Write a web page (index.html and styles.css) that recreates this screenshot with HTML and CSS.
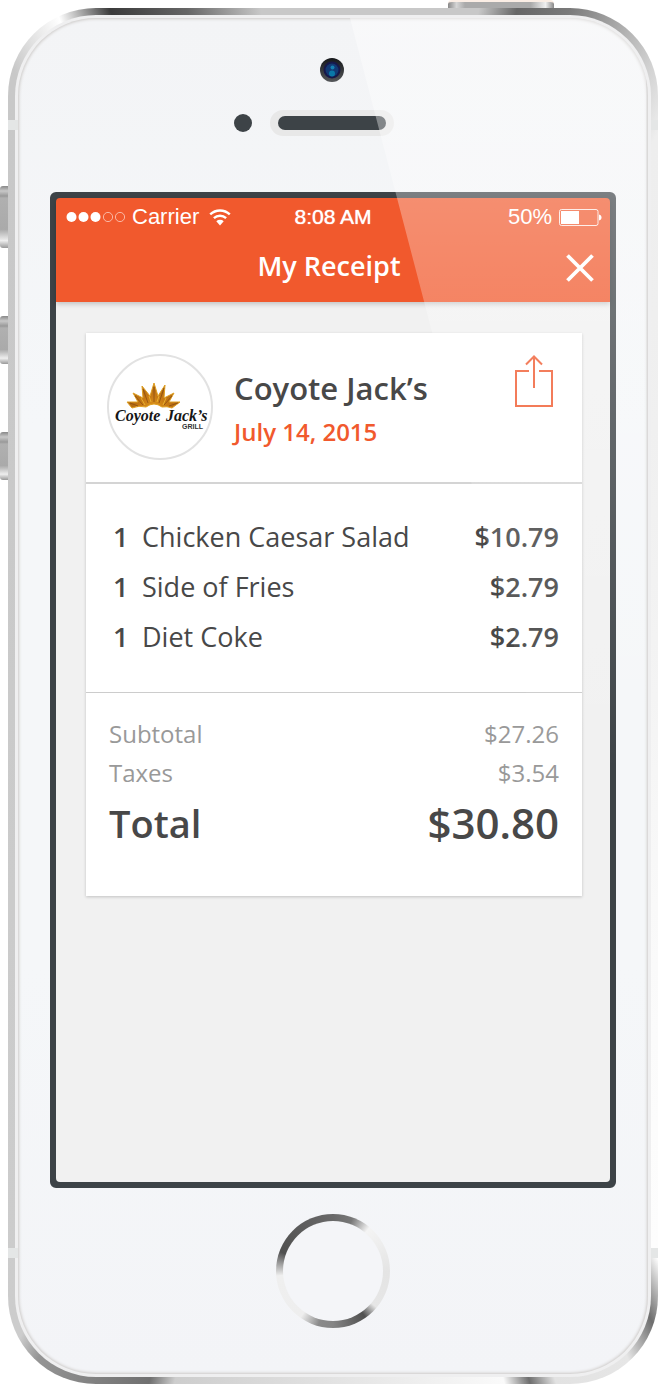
FILE: index.html
```html
<!DOCTYPE html>
<html lang="en">
<head>
    <meta charset="UTF-8">
    <meta name="viewport" content="width=device-width, initial-scale=1.0">
    <title>My Receipt</title>
    <link rel="stylesheet" href="styles.css">
</head>
<body>
    <div class="device">
        <div class="side-button mute"></div>
        <div class="side-button volume-up"></div>
        <div class="side-button volume-down"></div>
        <div class="power-button"></div>

        <div class="frame">
            <div class="rim">
                <div class="face">
                    <div class="top-bezel">
                        <div class="camera">
                            <svg width="24" height="24" viewBox="0 0 24 24" aria-hidden="true">
                                <defs>
                                    <linearGradient id="lensRing" x1="0" y1="0" x2="0" y2="1">
                                        <stop offset="0" stop-color="#15171a"/>
                                        <stop offset="1" stop-color="#55575a"/>
                                    </linearGradient>
                                </defs>
                                <circle cx="12" cy="12" r="12" fill="url(#lensRing)"/>
                                <circle cx="12" cy="12" r="8.5" fill="#17194a"/>
                                <circle cx="12" cy="12" r="6.5" fill="#123a74"/>
                                <circle cx="12.5" cy="9.5" r="2" fill="#1580b0"/>
                                <circle cx="12" cy="15.5" r="3" fill="#0a78a8"/>
                            </svg>
                        </div>
                        <div class="earpiece">
                            <span class="sensor"></span>
                            <span class="speaker"></span>
                        </div>
                    </div>

                    <div class="screen">
                        <header class="app-header">
                            <div class="status-bar">
                                <div class="status-left">
                                    <svg class="signal" width="60" height="12" viewBox="0 0 60 12" aria-hidden="true">
                                        <circle cx="5.5" cy="6" r="5" fill="#fff"/>
                                        <circle cx="17.5" cy="6" r="5" fill="#fff"/>
                                        <circle cx="29.5" cy="6" r="5" fill="#fff"/>
                                        <circle cx="42" cy="6" r="4.6" fill="none" stroke="#fff" stroke-opacity=".7" stroke-width=".8"/>
                                        <circle cx="54" cy="6" r="4.6" fill="none" stroke="#fff" stroke-opacity=".7" stroke-width=".8"/>
                                    </svg>
                                    <span>Carrier</span>
                                    <svg class="wifi" width="22" height="17" viewBox="0 0 22 17" aria-hidden="true">
                                        <path d="M1.2 5.4a14.2 14.2 0 0 1 19.6 0M4.9 9.2a9 9 0 0 1 12.2 0" fill="none" stroke="#fff" stroke-width="2.4"/>
                                        <path d="M7.3 12.3a5.5 5.5 0 0 1 7.4 0L11 16.4z" fill="#fff"/>
                                    </svg>
                                </div>
                                <div class="status-time">8:08 AM</div>
                                <div class="status-right">
                                    <span>50%</span>
                                    <svg width="43" height="17" viewBox="0 0 43 17" aria-hidden="true">
                                        <rect x=".5" y=".5" width="38.5" height="16" rx="2" fill="none" stroke="#fff" stroke-opacity=".85"/>
                                        <rect x="2" y="2" width="18" height="13" fill="#fff"/>
                                        <path d="M40 5.5c1.7.3 2.5 1.5 2.5 3s-.8 2.7-2.5 3z" fill="#fff"/>
                                    </svg>
                                </div>
                            </div>
                            <div class="title-bar">
                                <h1 class="page-title">My Receipt</h1>
                                <button type="button" class="icon-button close" aria-label="Close">
                                    <svg width="28" height="28" viewBox="0 0 28 28" aria-hidden="true">
                                        <path d="M1.5 1.5l25 25M26.5 1.5l-25 25" stroke="#fff" stroke-width="3.8" fill="none"/>
                                    </svg>
                                </button>
                            </div>
                        </header>

                        <main class="content">
                            <article class="receipt">
                                <div class="merchant">
                                    <div class="logo">
                                        <svg width="102" height="102" viewBox="0 0 102 102" role="img" aria-label="Coyote Jack's Grill">
                                            <defs>
                                                <radialGradient id="sun" cx="45" cy="54" r="28" gradientUnits="userSpaceOnUse">
                                                    <stop offset="0" stop-color="#e09a1c"/>
                                                    <stop offset=".5" stop-color="#c87a14"/>
                                                    <stop offset="1" stop-color="#a86212"/>
                                                </radialGradient>
                                            </defs>
                                            <path d="M23 52L18 46 29 46 24 37 34 42 33 30 41 40 45 27 49 40 56 29 55 42 65 37 60 46 71 46 63 52Q58 50 53 51Q45 45 37 51Q30 49 23 52z" fill="url(#sun)" stroke="#e0a022" stroke-width="1" stroke-linejoin="round"/>
                                            <path d="M29 50l-8-3M34 49l-8-9M39 47l-5-14M45 46V31M50 47l5-15M55 49l8-9M60 50l9-3" stroke="#8a4e12" stroke-width=".8" fill="none"/>
                                            <path d="M36 49l-4-7M42 46l-2-6M48 46l2-6M54 49l3-7" stroke="#f0bd35" stroke-width=".8" fill="none"/>
                                            <text class="logo-script" x="6" y="65">Coyote</text>
                                            <text class="logo-script" x="57" y="65">Jack’s</text>
                                            <text class="logo-grill" x="73" y="73">GRILL</text>
                                        </svg>
                                    </div>
                                    <div class="merchant-info">
                                        <h2 class="merchant-name">Coyote Jack’s</h2>
                                        <time class="date" datetime="2015-07-14">July 14, 2015</time>
                                    </div>
                                    <button type="button" class="icon-button share" aria-label="Share">
                                        <svg width="38" height="52" viewBox="0 0 38 52" aria-hidden="true">
                                            <path d="M14 16H1V51H37V16H24M19 33V2M11 9.5L19 1.5l8 8" fill="none" stroke="#f0592e" stroke-width="2"/>
                                        </svg>
                                    </button>
                                </div>

                                <table class="items">
                                    <tbody>
                                        <tr>
                                            <td class="qty">1</td>
                                            <td class="name">Chicken Caesar Salad</td>
                                            <td class="price">$10.79</td>
                                        </tr>
                                        <tr>
                                            <td class="qty">1</td>
                                            <td class="name">Side of Fries</td>
                                            <td class="price">$2.79</td>
                                        </tr>
                                        <tr>
                                            <td class="qty">1</td>
                                            <td class="name">Diet Coke</td>
                                            <td class="price">$2.79</td>
                                        </tr>
                                    </tbody>
                                </table>

                                <table class="totals">
                                    <tbody>
                                        <tr>
                                            <th scope="row">Subtotal</th>
                                            <td>$27.26</td>
                                        </tr>
                                        <tr>
                                            <th scope="row">Taxes</th>
                                            <td>$3.54</td>
                                        </tr>
                                        <tr class="grand-total">
                                            <th scope="row">Total</th>
                                            <td>$30.80</td>
                                        </tr>
                                    </tbody>
                                </table>
                            </article>
                        </main>
                    </div>

                    <div class="bottom-bezel">
                        <div class="home-button"></div>
                    </div>

                    <div class="glare"></div>
                </div>
            </div>
            <span class="antenna antenna-top"></span>
            <span class="antenna antenna-bottom"></span>
        </div>
    </div>
</body>
</html>
```
FILE: styles.css
```css
:root {
    --orange: #f1592d;
    --dark: #3d4347;
    --text: #484848;
    --muted: #999;
}

* {
    box-sizing: border-box;
}

body {
    margin: 0;
    background: #fff;
    font-family: "Open Sans", "Noto Sans", sans-serif;
    color: var(--text);
}

h1,
h2 {
    margin: 0;
}

table {
    width: 100%;
    border-collapse: collapse;
}

td,
th {
    padding: 0;
    text-align: left;
}

svg {
    display: block;
}

/* Phone body */
.device {
    position: relative;
    display: flex;
    min-height: 100vh;
    padding: 8px 0 0 8px;
}

.frame {
    position: relative;
    display: flex;
    flex: 1;
    padding: 7px;
    border-radius: 88px;
    background: conic-gradient(
        #c8c8c8 0deg, #c8c8c8 12deg, #666 15deg, #7a7a7a 19deg, #b5b5b5 24deg,
        #d4d4d4 27deg, #eee 30deg, #f4f4f4 90deg, #fdfdfd 150deg, #6e6e6e 153deg,
        #e6e6e6 156deg, #e2e2e2 162deg, #6e6e6e 164deg, #fafafa 166deg,
        #cdcdcd 193deg, #707070 195deg, #808080 199deg, #959595 204deg,
        #ccc 206deg, #c8c8c8 333deg, #fff 338deg, #3a3a3a 342deg,
        #666 348deg, #c8c8c8 354deg, #c8c8c8 360deg
    );
}

.rim {
    display: flex;
    flex: 1;
    padding: 3px;
    border-radius: 81px;
    background: #efeff0;
}

.face {
    position: relative;
    display: flex;
    flex: 1;
    flex-direction: column;
    padding: 0 32px;
    overflow: hidden;
    border-radius: 78px;
    background: linear-gradient(#f3f4f6, #f5f7f9 30%, #f5f7f9 70%, #f3f4f7);
    box-shadow: inset 0 0 3px 1px #ccc9c7;
}

.antenna {
    position: absolute;
    right: 0;
    left: 0;
    height: 10px;
    background: linear-gradient(90deg, #e4e6e6 10px, transparent 10px, transparent calc(100% - 7px), #e4e6e6 calc(100% - 7px));
}

.antenna-top {
    top: 112px;
}

.antenna-bottom {
    bottom: 126px;
}

.side-button {
    position: absolute;
    left: 0;
    width: 8px;
    height: 48px;
    border-radius: 3px 0 0 3px;
    background: linear-gradient(#888, #c8c8c8 5px, #999 10px, #b0b0b0 12px, #aaa 70%, #eee 88%, #999);
}

.mute {
    top: 186px;
    height: 62px;
}

.volume-up {
    top: 316px;
}

.volume-down {
    top: 432px;
}

.power-button {
    position: absolute;
    top: 0;
    right: 104px;
    width: 106px;
    height: 8px;
    border-top: 2px solid #fbeee5;
    border-radius: 4px 4px 0 0;
    background: linear-gradient(90deg, #888, #d5d5d5 8%, #aaa 16%, #aaa 78%, #f0f0f0 92%, #888);
}

/* Area above the screen */
.top-bezel {
    display: flex;
    flex-direction: column;
    align-items: center;
    height: 174px;
    padding: 40px 2px 0 0;
}

.earpiece {
    display: grid;
    grid-template-columns: 1fr auto 1fr;
    align-items: center;
    align-self: stretch;
    margin-top: 28px;
}

.sensor {
    justify-self: end;
    width: 18px;
    height: 18px;
    margin-right: 18px;
    border-radius: 50%;
    background: var(--dark);
}

.speaker {
    width: 124px;
    height: 26px;
    border: 6px solid #e8e8e8;
    border-right-width: 8px;
    border-left-width: 8px;
    border-radius: 13px;
    background: #e8e8e8;
}

.speaker::before {
    content: "";
    display: block;
    height: 14px;
    border-radius: 7px;
    background: var(--dark);
}

/* Screen */
.screen {
    display: flex;
    flex: 1;
    flex-direction: column;
    border: 6px solid var(--dark);
    border-radius: 6px;
    background: var(--dark);
}

.app-header {
    position: relative;
    height: 104px;
    border-radius: 4px 4px 0 0;
    background: var(--orange);
    box-shadow: 0 2px 5px rgba(0, 0, 0, 0.2);
    color: #fff;
}

.status-bar {
    display: grid;
    grid-template-columns: 1fr auto 1fr;
    align-items: center;
    height: 38px;
    padding: 0 8px;
    font-family: "Liberation Sans", Arial, sans-serif;
    font-size: 22px;
}

.status-left,
.status-right {
    display: flex;
    align-items: center;
}

.status-left {
    gap: 6px;
}

.signal {
    margin-left: 2px;
}

.wifi {
    margin-left: 4px;
}

.status-time {
    font-size: 21px;
    text-shadow: 0 0 1px #fff;
}

.status-right {
    gap: 7px;
    justify-content: flex-end;
}

.title-bar {
    display: grid;
    grid-template-columns: 1fr auto 1fr;
    align-items: center;
    height: 64px;
    padding: 0 16px 0 8px;
}

.page-title {
    grid-column: 2;
    padding-bottom: 4px;
    font-size: 27px;
    font-weight: 600;
    line-height: 36px;
}

.icon-button {
    padding: 0;
    border: none;
    background: none;
    cursor: pointer;
}

.close {
    justify-self: end;
}

.content {
    flex: 1;
    padding: 31px 28px 31px 30px;
    border-radius: 0 0 4px 4px;
    background: #f1f1f1;
}

/* Receipt card */
.receipt {
    background: #fff;
    box-shadow: 0 1px 3px rgba(0, 0, 0, 0.2);
}

.merchant {
    display: flex;
    align-items: flex-start;
    height: 151px;
    padding: 21px 29px 0 21px;
    border-bottom: 2px solid #d4d4d4;
}

.logo {
    width: 106px;
    height: 106px;
    border: 2px solid #e2e2e2;
    border-radius: 50%;
}

.logo-script {
    font-family: "Liberation Serif", serif;
    font-size: 16px;
    font-style: italic;
    font-weight: bold;
    fill: #161616;
}

.logo-grill {
    font-family: "Liberation Sans", sans-serif;
    font-size: 7px;
    font-weight: bold;
    fill: #333;
}

.merchant-info {
    flex: 1;
    padding: 12px 0 0 21px;
}

.merchant-name {
    font-size: 31px;
    font-weight: 600;
    line-height: 44px;
}

.date {
    display: block;
    color: var(--orange);
    font-size: 24px;
    font-weight: 600;
    line-height: 44px;
}

.share {
    margin-top: 1px;
}

.items {
    display: block;
    padding: 28px 23px 30px 27px;
    border-bottom: 1px solid #ccc;
    font-size: 27px;
    line-height: 50px;
}

.items tbody,
.totals tbody {
    display: block;
}

.items tr,
.totals tr {
    display: flex;
}

.qty {
    width: 29px;
    font-weight: 600;
}

.name {
    flex: 1;
}

.price {
    font-weight: 600;
}

.totals {
    display: block;
    padding: 21px 23px 42px;
    color: var(--muted);
    font-size: 24px;
    line-height: 39px;
}

.totals tr {
    justify-content: space-between;
}

.totals th {
    font-weight: 400;
}

.totals .grand-total {
    color: var(--text);
    line-height: 62px;
}

.grand-total th,
.grand-total td {
    font-weight: 600;
}

.grand-total th {
    font-size: 38px;
}

.grand-total td {
    font-size: 42px;
}

/* Area below the screen */
.bottom-bezel {
    display: flex;
    justify-content: center;
    height: 186px;
    padding-top: 26px;
}

.home-button {
    width: 114px;
    height: 114px;
    padding: 7px;
    border-radius: 50%;
    background: conic-gradient(
        #696969 0deg, #777 20deg, #f4f4f4 40deg, #e4e4e4 90deg, #e6e6e6 130deg,
        #505050 145deg, #858585 180deg, #8a8a8a 195deg, #eee 215deg,
        #efefef 265deg, #505050 290deg, #696969 360deg
    );
}

.home-button::before {
    content: "";
    display: block;
    height: 100px;
    border-radius: 50%;
    background: #f4f5f8;
}

/* Diagonal light reflection over the glass */
.glare {
    position: absolute;
    top: 0;
    right: 2px;
    bottom: 0;
    left: 332px;
    background: linear-gradient(rgba(255, 255, 255, 0.42), rgba(255, 255, 255, 0) 750px);
    clip-path: polygon(0 0, 100% 0, 100% 1160px, 303px 1160px);
    pointer-events: none;
}
```
